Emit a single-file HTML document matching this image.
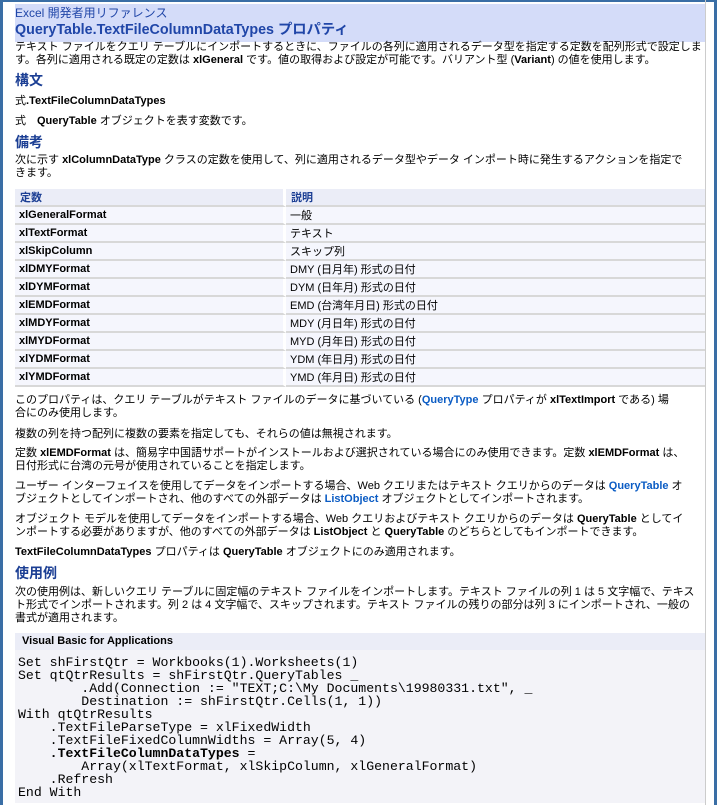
<!DOCTYPE html>
<html><head><meta charset="utf-8"><style>
*{margin:0;padding:0;box-sizing:border-box}
body{width:720px;height:805px;overflow:hidden;background:#fff;font-family:"Liberation Sans","Noto Sans CJK JP",sans-serif;font-size:11px;color:#000;position:relative}
.fl{position:absolute;left:0;top:0;width:3px;height:805px;background:#3a6ea5}
.fr{position:absolute;left:714px;top:0;width:3px;height:805px;background:#3a6ea5}
.ft{position:absolute;left:0;top:0;width:717px;height:2px;background:#3a6ea5}
.vr{position:absolute;left:705px;top:0;width:1px;height:805px;background:#ccc}
.a{position:absolute;left:15px;white-space:nowrap;line-height:13px}
.hb{position:absolute;left:15px;top:4px;width:690px;height:38px;background:#d4dcf9}
.blue{color:#2046a8}
h{font-weight:bold;color:#1c3f94;font-size:14px}
b{font-weight:bold}
.l{color:#0b5cc4;font-weight:bold}
table{position:absolute;left:15px;top:189px;width:690px;border-collapse:separate;border-spacing:0}
td,th{height:18px;font-size:11px;padding:0 4px;text-align:left;border-bottom:2px solid #d8d8d8;background:#f5f6fd;white-space:nowrap}
th{background:#ebedf7;color:#1c3f94;font-weight:bold;height:16px;padding-left:5px}
td:first-child,th:first-child{width:271px;border-right:3px solid #fff;font-weight:bold}
.cb{position:absolute;left:15px;top:633px;width:690px;height:170px;background:#f3f3f8}
.ch{position:absolute;left:15px;top:633px;width:690px;height:17px;background:#ebedf7;font-weight:bold;padding-left:7px;line-height:17px;color:#000}
pre{position:absolute;left:18px;top:656px;font-family:"Liberation Mono",monospace;font-size:13.2px;line-height:13px;color:#000}
</style></head><body>
<div class="ft"></div><div class="fl"></div><div class="fr"></div><div class="vr"></div>
<div class="hb"></div>
<div class="a blue" style="top:7px;font-size:12px">Excel 開発者用リファレンス</div>
<div class="a blue" style="top:22px;font-size:14.3px;font-weight:bold;line-height:17px">QueryTable.TextFileColumnDataTypes プロパティ</div>
<div class="a" style="top:41px">テキスト ファイルをクエリ テーブルにインポートするときに、ファイルの各列に適用されるデータ型を指定する定数を配列形式で設定しま<br>す。各列に適用される既定の定数は <b>xlGeneral</b> です。値の取得および設定が可能です。バリアント型 (<b>Variant</b>) の値を使用します。</div>
<div class="a" style="top:74px"><h>構文</h></div>
<div class="a" style="top:95px">式<b>.TextFileColumnDataTypes</b></div>
<div class="a" style="top:115px">式　<b>QueryTable</b> オブジェクトを表す変数です。</div>
<div class="a" style="top:136px"><h>備考</h></div>
<div class="a" style="top:154px">次に示す <b>xlColumnDataType</b> クラスの定数を使用して、列に適用されるデータ型やデータ インポート時に発生するアクションを指定で<br>きます。</div>
<table>
<tr><th>定数</th><th>説明</th></tr>
<tr><td>xlGeneralFormat</td><td>一般</td></tr>
<tr><td>xlTextFormat</td><td>テキスト</td></tr>
<tr><td>xlSkipColumn</td><td>スキップ列</td></tr>
<tr><td>xlDMYFormat</td><td>DMY (日月年) 形式の日付</td></tr>
<tr><td>xlDYMFormat</td><td>DYM (日年月) 形式の日付</td></tr>
<tr><td>xlEMDFormat</td><td>EMD (台湾年月日) 形式の日付</td></tr>
<tr><td>xlMDYFormat</td><td>MDY (月日年) 形式の日付</td></tr>
<tr><td>xlMYDFormat</td><td>MYD (月年日) 形式の日付</td></tr>
<tr><td>xlYDMFormat</td><td>YDM (年日月) 形式の日付</td></tr>
<tr><td>xlYMDFormat</td><td>YMD (年月日) 形式の日付</td></tr>
</table>
<div class="a" style="top:394px">このプロパティは、クエリ テーブルがテキスト ファイルのデータに基づいている (<span class="l">QueryType</span> プロパティが <b>xlTextImport</b> である) 場<br>合にのみ使用します。</div>
<div class="a" style="top:428px">複数の列を持つ配列に複数の要素を指定しても、それらの値は無視されます。</div>
<div class="a" style="top:447px">定数 <b>xlEMDFormat</b> は、簡易字中国語サポートがインストールおよび選択されている場合にのみ使用できます。定数 <b>xlEMDFormat</b> は、<br>日付形式に台湾の元号が使用されていることを指定します。</div>
<div class="a" style="top:480px">ユーザー インターフェイスを使用してデータをインポートする場合、Web クエリまたはテキスト クエリからのデータは <span class="l">QueryTable</span> オ<br>ブジェクトとしてインポートされ、他のすべての外部データは <span class="l">ListObject</span> オブジェクトとしてインポートされます。</div>
<div class="a" style="top:513px">オブジェクト モデルを使用してデータをインポートする場合、Web クエリおよびテキスト クエリからのデータは <b>QueryTable</b> としてイ<br>ンポートする必要がありますが、他のすべての外部データは <b>ListObject</b> と <b>QueryTable</b> のどちらとしてもインポートできます。</div>
<div class="a" style="top:546px"><b>TextFileColumnDataTypes</b> プロパティは <b>QueryTable</b> オブジェクトにのみ適用されます。</div>
<div class="a" style="top:567px"><h>使用例</h></div>
<div class="a" style="top:586px">次の使用例は、新しいクエリ テーブルに固定幅のテキスト ファイルをインポートします。テキスト ファイルの列 1 は 5 文字幅で、テキス<br>ト形式でインポートされます。列 2 は 4 文字幅で、スキップされます。テキスト ファイルの残りの部分は列 3 にインポートされ、一般の<br>書式が適用されます。</div>
<div class="cb"></div>
<div class="ch">Visual Basic for Applications</div>
<pre>Set shFirstQtr = Workbooks(1).Worksheets(1)
Set qtQtrResults = shFirstQtr.QueryTables _
        .Add(Connection := "TEXT;C:\My Documents\19980331.txt", _
        Destination := shFirstQtr.Cells(1, 1))
With qtQtrResults
    .TextFileParseType = xlFixedWidth
    .TextFileFixedColumnWidths = Array(5, 4)
    <b>.TextFileColumnDataTypes</b> =
        Array(xlTextFormat, xlSkipColumn, xlGeneralFormat)
    .Refresh
End With</pre>
</body></html>
